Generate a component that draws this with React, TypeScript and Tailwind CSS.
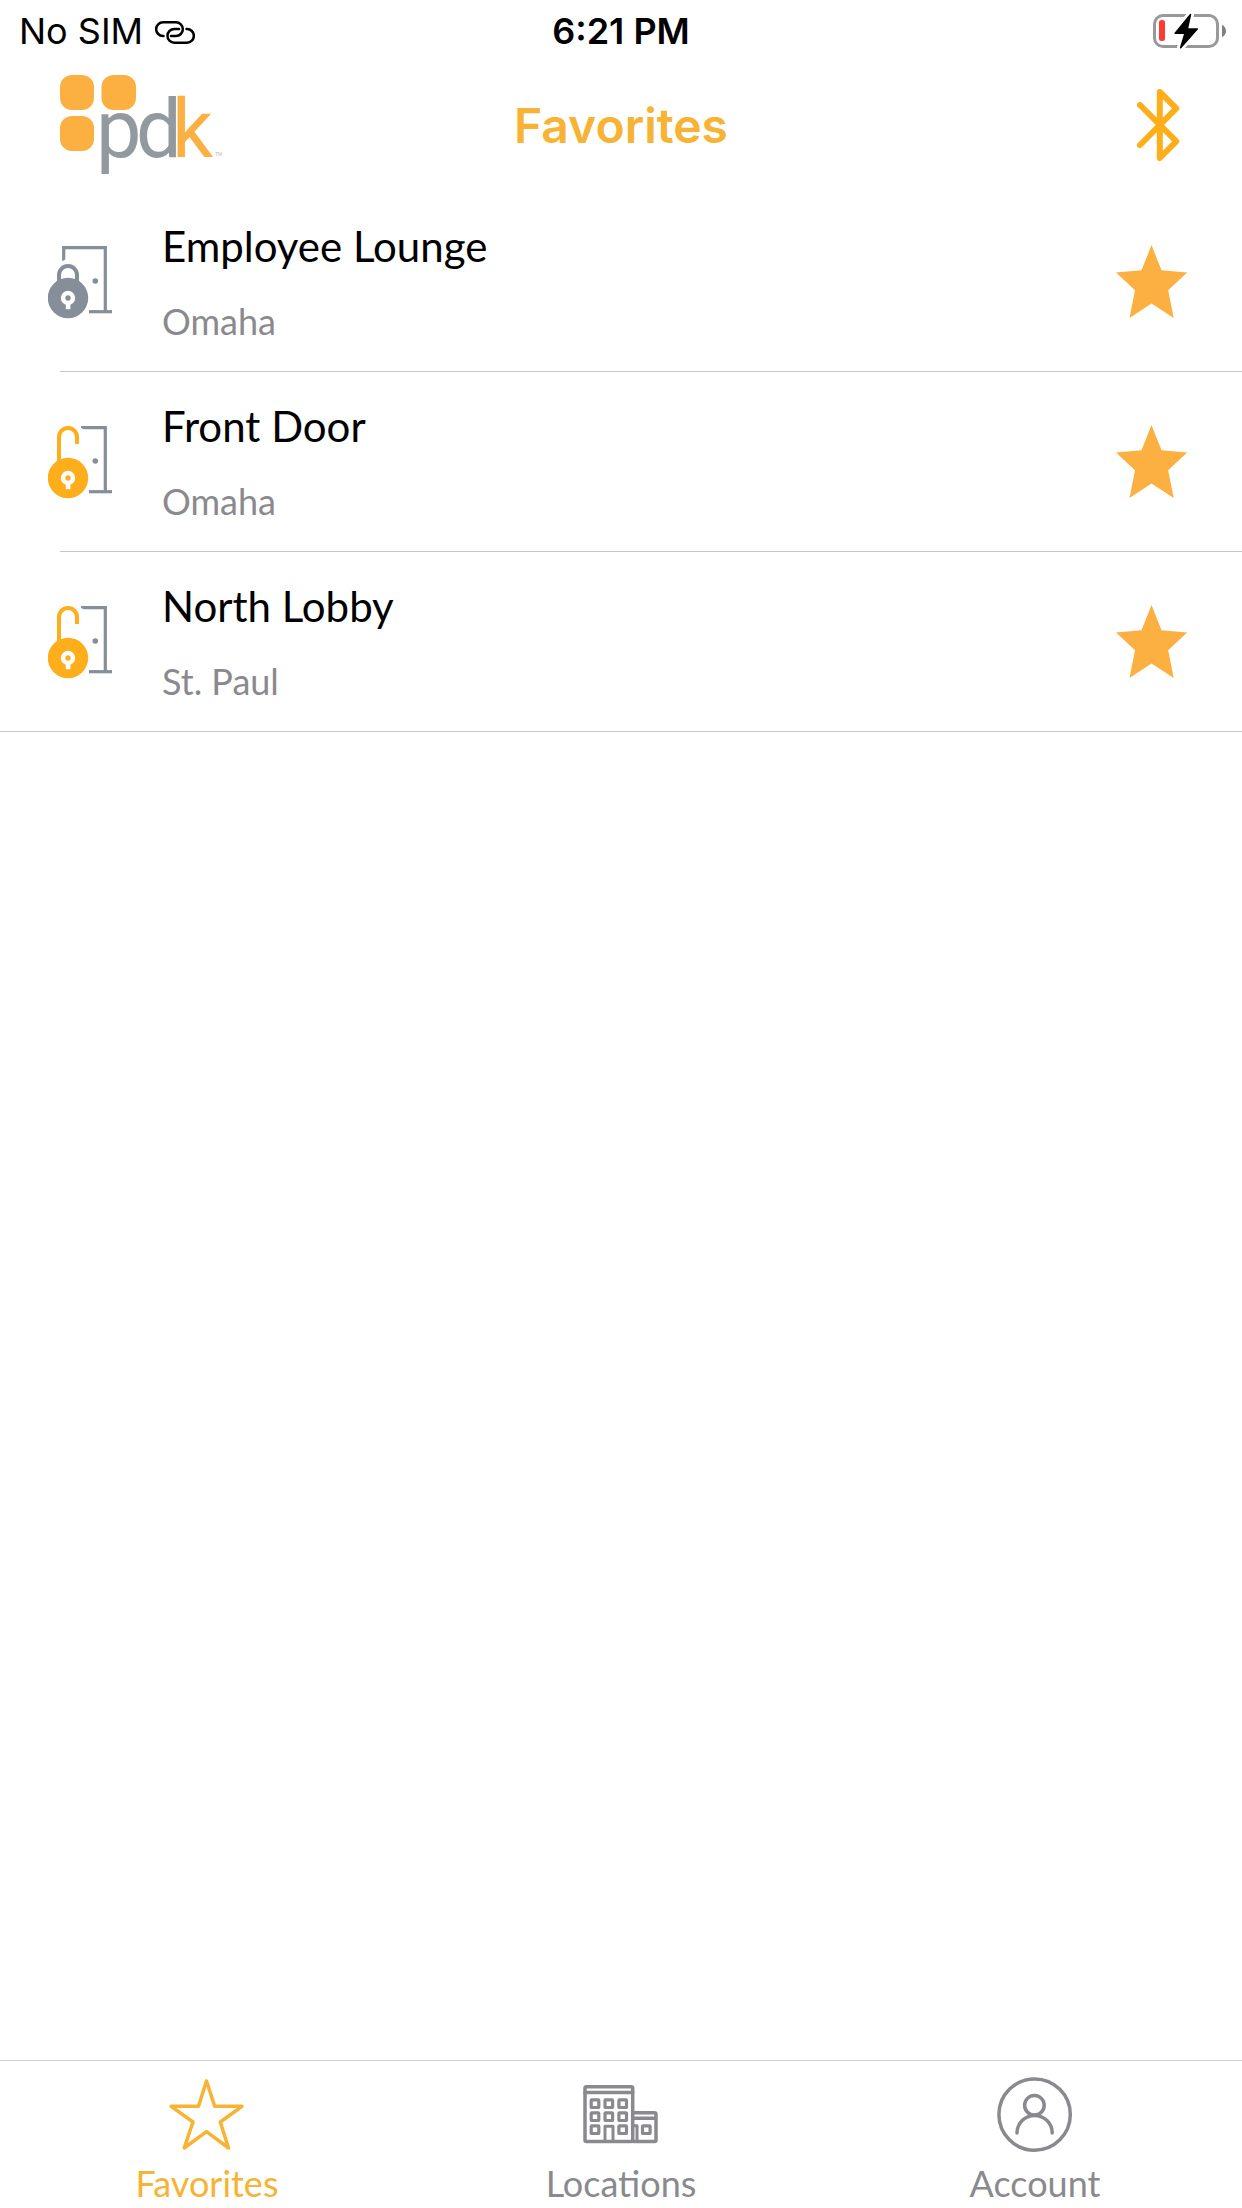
import { useState } from 'react';

type Door = { id: number; name: string; site: string; locked: boolean };
type Tab = 'Favorites' | 'Locations' | 'Account';

const DOORS: Door[] = [
  { id: 1, name: 'Employee Lounge', site: 'Omaha', locked: true },
  { id: 2, name: 'Front Door', site: 'Omaha', locked: false },
  { id: 3, name: 'North Lobby', site: 'St. Paul', locked: false },
];

const TABS: Tab[] = ['Favorites', 'Locations', 'Account'];

function LinkIcon() {
  return (
    <svg viewBox="0 -3 40 28" className="w-10 h-7" fill="none" stroke="#000" strokeWidth="2.5" strokeLinecap="round">
      <path d="M8.5 16H8a6.85 6.85 0 0 1 0-13.7h13a6.85 6.85 0 0 1 0 13.7h-5" />
      <path d="M24 9h-4.7a6.85 6.85 0 0 0 0 13.7H32A6.85 6.85 0 0 0 32 9h-.5" />
    </svg>
  );
}

function BatteryIcon() {
  const bolt = 'M37.5 1.5 22.2 20.3H32L27.6 34.8 44.2 15.9H34.4Z';
  return (
    <svg viewBox="0 0 74 36" className="w-[74px] h-9" fill="none">
      <rect x="1.5" y="2.5" width="63" height="31" rx="8.5" stroke="#999" strokeWidth="3" />
      <path d="M69 11.7q4 2.3 4 6.3t-4 6.3z" fill="#808080" />
      <rect x="6" y="7" width="6" height="21" rx="2.5" fill="#ff3b30" />
      <path d={bolt} fill="#fff" stroke="#fff" strokeWidth="7" strokeLinejoin="round" />
      <path d={bolt} fill="#000" stroke="#000" strokeWidth="1.5" strokeLinejoin="round" />
    </svg>
  );
}

function Logo() {
  return (
    <svg viewBox="0 0 162 102" className="w-[162px] h-[102px] overflow-visible" role="img" aria-label="pdk">
      <g fill="#fcb042">
        <rect x="0" y="0" width="34" height="35" rx="12" />
        <rect x="41.5" y="0" width="34.5" height="35" rx="12" />
        <rect x="0" y="41" width="34" height="35" rx="12" />
      </g>
      <g className="font-['Roboto',sans-serif] text-[81px]">
        <text y="82" fill="#939a9f">
          <tspan x="36">p</tspan>
          <tspan x="76">d</tspan>
        </text>
        <text x="112" y="82" fill="#fcb042">k</text>
      </g>
      <text x="155" y="81" fill="#b5b8ba" className="font-['Liberation_Sans',sans-serif] text-[5px]">TM</text>
    </svg>
  );
}

function BluetoothIcon() {
  return (
    <svg viewBox="0 0 43 74" className="w-[43px] h-[74px]" fill="none" stroke="#fdae1a" strokeWidth="6" strokeLinecap="round" strokeLinejoin="round">
      <path d="M3 16 39.3 52.3 22.8 69V3l16.5 16.3L3 56" />
    </svg>
  );
}

function DoorIcon({ locked }: { locked: boolean }) {
  const color = locked ? '#868e99' : '#fdae1a';
  return (
    <svg viewBox="0 -2 64 75" className="w-16 h-[75px]" fill="none">
      <g stroke="#868e99" strokeWidth="3.2">
        <path d={locked ? 'M15.7 14.7v-13h41.6v64' : 'M33 1.7h24.3v64'} />
        <path d="M41 65.7h23" />
      </g>
      {/* slanted cut where the frame runs behind the lock */}
      <path d={locked ? 'M13 16.5 18 13V17H13Z' : 'M31 0 36 4H31Z'} fill="#fff" />
      <circle cx="47.3" cy="35" r="2.8" fill="#868e99" />
      <path d={locked ? 'M11 38v-9a9 9 0 0 1 18 0v9' : 'M11 38V11a9 9 0 0 1 18 0v7'} stroke={color} strokeWidth="4" />
      <circle cx="20" cy="52" r="20.2" fill={color} />
      <circle cx="20" cy="52" r="7.2" fill="#fff" />
      <path d="M17.8 57h4.6v6.2h-4.6z" fill="#fff" />
      <circle cx="20" cy="52" r="2.7" fill={color} />
    </svg>
  );
}

function StarIcon({ filled }: { filled: boolean }) {
  return (
    <svg viewBox="0 0 72 74" className="w-[72px] h-[74px]">
      <path
        d="M35.5 0 45.5 25.3 71.2 27.5 52.2 45.3 57.7 73 35.5 58.5 13.5 73 19 45.3 0 27.5 25.5 25.3Z"
        fill={filled ? '#fcb042' : 'none'}
        stroke={filled ? 'none' : '#fcb042'}
        strokeWidth="3"
      />
    </svg>
  );
}

function TabIcon({ tab }: { tab: Tab }) {
  return (
    <svg viewBox="0 0 76 76" className="w-[76px] h-[76px]" fill="none" stroke="currentColor" strokeWidth="3.5" strokeLinecap="round" strokeLinejoin="round">
      {tab === 'Favorites' && (
        <path d="M37.5 4 45.7 29.3H73L51.3 45 59.5 71 37.5 54.7 15.2 71 24 45 2.2 29.3H29.5Z" />
      )}
      {tab === 'Locations' && (
        <>
          <rect x="2" y="9.8" width="47.7" height="54.8" rx="1.5" />
          <path d="M2 15.6h47.7M50 35.8h21.5a1.5 1.5 0 0 1 1.5 1.5v25.8a1.5 1.5 0 0 1-1.5 1.5H50M50 41.2h23" />
          <path d="M22 64V49.2h8V64M50.5 48.7h3.5V64" strokeWidth="3" />
          <g strokeWidth="3.2">
            {[26.7, 39.7, 52.7].map((y) =>
              [12, 25.8, 39.7]
                .filter((x) => !(y > 50 && x === 25.8))
                .map((x) => <rect key={`${x}-${y}`} x={x - 3.8} y={y - 3.8} width="7.6" height="7.6" rx="0.6" />)
            )}
            <rect x="59.5" y="48.9" width="7.6" height="7.6" rx="0.6" />
          </g>
        </>
      )}
      {tab === 'Account' && (
        <>
          <circle cx="37.6" cy="37.6" r="35.7" />
          <circle cx="37.4" cy="28.3" r="9.8" />
          <path d="M20 56a17.6 17.6 0 0 1 35.2 0" />
        </>
      )}
    </svg>
  );
}

function StatusBar() {
  return (
    <div className="grid grid-cols-3 items-center h-[60px] px-[15px] pt-0.5 font-['Inter',sans-serif] text-[36px] leading-[44px] text-black">
      <div className="flex items-center gap-3 pl-1">
        <span>No SIM</span>
        <LinkIcon />
      </div>
      <span className="text-center font-semibold">6:21 PM</span>
      <div className="flex justify-end">
        <BatteryIcon />
      </div>
    </div>
  );
}

function DoorRow({ door, last, starred, onStar }: { door: Door; last: boolean; starred: boolean; onStar: () => void }) {
  return (
    <li>
      <div className="flex items-center h-[179px] pl-12 pr-[54px]">
        <DoorIcon locked={door.locked} />
        <div className="flex-1 flex flex-col gap-7 pl-[50px]">
          <h2 className="text-[42px] leading-[50px] text-black">{door.name}</h2>
          <p className="text-[36px] leading-[44px] text-[#8a8a8e]">{door.site}</p>
        </div>
        <button onClick={onStar} aria-pressed={starred} aria-label={`Favorite ${door.name}`}>
          <StarIcon filled={starred} />
        </button>
      </div>
      <div className={`h-px bg-[#c6c6c8] ${last ? '' : 'ml-[60px]'}`} />
    </li>
  );
}

export default function App() {
  const [tab, setTab] = useState<Tab>('Favorites');
  const [unstarred, setUnstarred] = useState<number[]>([]);

  const toggleStar = (id: number) =>
    setUnstarred((ids) => (ids.includes(id) ? ids.filter((i) => i !== id) : [...ids, id]));

  return (
    <div className="min-h-screen flex flex-col bg-white font-['Lato',sans-serif]">
      <StatusBar />
      <header className="grid grid-cols-3 items-center h-[132px] px-[60px]">
        <Logo />
        <h1 className="text-center font-['Inter',sans-serif] font-semibold text-[48px] leading-[60px] text-[#f7b334]">{tab}</h1>
        <button className="justify-self-end pr-0.5" aria-label="Bluetooth">
          <BluetoothIcon />
        </button>
      </header>

      <main className="flex-1">
        <ul>
          {DOORS.map((door, i) => (
            <DoorRow
              key={door.id}
              door={door}
              last={i === DOORS.length - 1}
              starred={!unstarred.includes(door.id)}
              onStar={() => toggleStar(door.id)}
            />
          ))}
        </ul>
      </main>

      <nav className="grid grid-cols-3 h-[148px] border-t border-[#d0d0d2]">
        {TABS.map((name) => (
          <button
            key={name}
            onClick={() => setTab(name)}
            className={`flex flex-col items-center gap-2 pt-4 text-[36px] leading-[44px] ${tab === name ? 'text-[#f7b334]' : 'text-[#8a8a8e]'}`}
          >
            <TabIcon tab={name} />
            {name}
          </button>
        ))}
      </nav>
    </div>
  );
}
